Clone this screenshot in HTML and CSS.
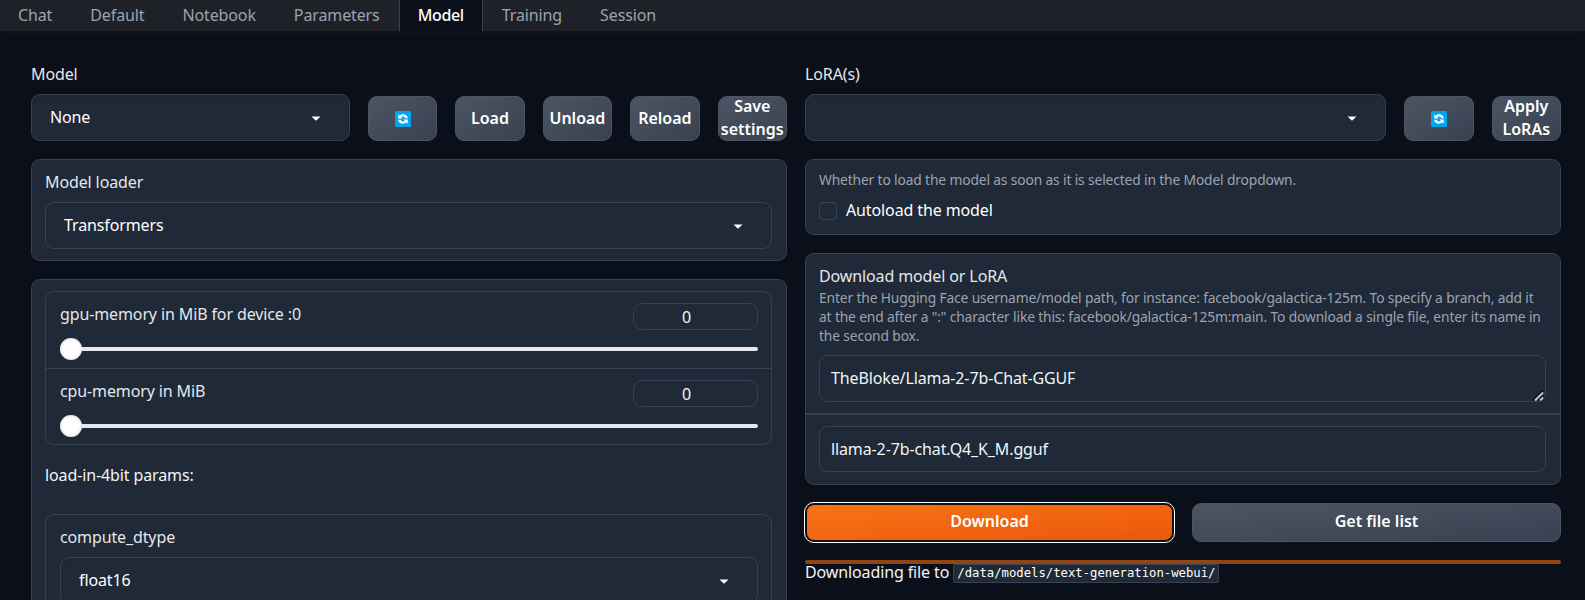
FILE: index.html
```
<!DOCTYPE html>
<html lang="en">
<head>
<meta charset="utf-8">
<title>Text generation web UI</title>
<link rel="stylesheet" href="styles.css">
</head>
<body>
<svg class="defs" width="0" height="0">
  <symbol id="refresh" viewBox="0 0 16 16">
    <rect width="16" height="16" rx="1.5" fill="#00a4ef"/>
    <path d="M3.2 3.2v4.3h4.3L6.100 6.100C7.300 5.100 9.300 5.100 10.600 7.300H12.900C12.300 3.400 7.500 1.900 4.700 4.700ZM12.800 12.800V8.500H8.500L9.900 9.900C8.700 10.900 6.700 10.900 5.400 8.700H3.100C3.700 12.600 8.500 14.100 11.300 11.300Z" fill="#fff"/>
  </symbol>
  <symbol id="caret" viewBox="0 0 10 5"><path d="M.5.5h9L5 4.700Z" fill="#fff"/></symbol>
</svg>
<nav class="tabs">
  <a class="tab">Chat</a><a class="tab">Default</a><a class="tab">Notebook</a><a class="tab">Parameters</a><a class="tab active">Model</a><a class="tab">Training</a><a class="tab">Session</a>
</nav>
<main class="columns">
  <section class="column">
    <div class="row">
      <div class="field"><span class="label">Model</span><div class="select">None<svg class="caret"><use href="#caret"/></svg></div></div>
      <button class="btn tool"><svg class="refresh"><use href="#refresh"/></svg></button>
      <button class="btn tool">Load</button>
      <button class="btn tool">Unload</button>
      <button class="btn tool">Reload</button>
      <button class="btn tool two-line">Save settings</button>
    </div>
    <div class="block loader">
      <span class="label">Model loader</span>
      <div class="select">Transformers<svg class="caret"><use href="#caret"/></svg></div>
    </div>
    <div class="block params">
      <div class="group">
        <div class="slider">
          <div class="slider-head"><span>gpu-memory in MiB for device :0</span><span class="number">0</span></div>
          <div class="track"><i class="thumb"></i></div>
        </div>
        <div class="slider">
          <div class="slider-head"><span>cpu-memory in MiB</span><span class="number">0</span></div>
          <div class="track"><i class="thumb"></i></div>
        </div>
      </div>
      <p class="note">load-in-4bit params:</p>
      <div class="group dtype">
        <span class="label">compute_dtype</span>
        <div class="select">float16<svg class="caret"><use href="#caret"/></svg></div>
      </div>
    </div>
  </section>
  <section class="column">
    <div class="row">
      <div class="field"><span class="label">LoRA(s)</span><div class="select"><svg class="caret"><use href="#caret"/></svg></div></div>
      <button class="btn tool"><svg class="refresh"><use href="#refresh"/></svg></button>
      <button class="btn tool two-line">Apply LoRAs</button>
    </div>
    <div class="block autoload">
      <p class="info">Whether to load the model as soon as it is selected in the Model dropdown.</p>
      <div class="check"><i class="box"></i><span>Autoload the model</span></div>
    </div>
    <div class="block download">
      <div class="repo">
        <span class="label">Download model or LoRA</span>
        <p class="info">Enter the Hugging Face username/model path, for instance: facebook/galactica-125m. To specify a branch, add it at the end after a ":" character like this: facebook/galactica-125m:main. To download a single file, enter its name in the second box.</p>
        <div class="input area">TheBloke/Llama-2-7b-Chat-GGUF
          <svg class="grip" viewBox="0 0 11 11"><path d="M.5 10L9.500 1M5.500 10.500L9.500 6.500" stroke="#05070c" stroke-width="1.800"/><path d="M2 10.500L10 2.500M7 10.500L10 7.500" stroke="#c5c8cd" stroke-width="2"/></svg>
        </div>
      </div>
      <div class="file"><div class="input">llama-2-7b-chat.Q4_K_M.gguf</div></div>
    </div>
    <div class="actions">
      <button class="btn primary">Download</button>
      <button class="btn">Get file list</button>
    </div>
    <div class="progress"></div>
    <p class="status">Downloading file to <code>/data/models/text-generation-webui/</code></p>
  </section>
</main>
</body>
</html>
```
FILE: styles.css
```
* { box-sizing: border-box; }
body {
  margin: 0;
  height: 600px;
  overflow: hidden;
  background: #0b0f19;
  color: #f3f4f6;
  font: 16px/24px "Noto Sans", sans-serif;
  letter-spacing: -.12px;
}
p { margin: 0; }
.defs { position: absolute; }

.tabs {
  display: flex;
  height: 31px;
  margin-left: -1px;
  background: #1f2129;
  box-shadow: 0 2px 5px #141414;
}
.tab {
  height: 31px;
  padding: 3px 18px 0;
  border: solid transparent;
  border-width: 0 1px;
  color: #9ca3af;
}
.tab.active {
  background: #0b0f19;
  border-color: #374151;
  color: #fff;
  font-weight: 500;
  letter-spacing: -.35px;
}

.columns {
  display: grid;
  grid-template-columns: 756px 756px;
  gap: 18px;
  height: 569px;
  overflow: hidden;
  padding: 31px 0 0 31px;
}
.row {
  display: flex;
  align-items: flex-end;
  gap: 18px;
  height: 79px;
}
.field { flex: 1; }
.label {
  display: block;
  height: 32px;
  color: #e5e7eb;
}
.select {
  display: flex;
  align-items: center;
  justify-content: space-between;
  height: 47px;
  padding: 0 28px 1px 18px;
  border: 1px solid #374151;
  border-radius: 9px;
  background: #1f2937;
  box-shadow: inset 0 2px 4px rgba(0, 0, 0, .06);
  color: #fff;
}
.caret {
  width: 10px;
  height: 5px;
  margin-left: auto;
  transform: translateY(1px);
}
.btn {
  display: flex;
  align-items: center;
  justify-content: center;
  padding: 0;
  border: 1px solid #4b5563;
  border-radius: 9px;
  background: linear-gradient(to bottom right, #4b5563, #374151);
  color: #fff;
  font: 600 16px/23px "Noto Sans", sans-serif;
}
.tool {
  width: 69.450px;
  height: 45px;
}
.two-line { padding-bottom: 2px; }
.refresh { width: 16px; height: 16px; }

.block {
  margin-top: 18px;
  border: 1px solid #374151;
  border-radius: 9px;
  background: #1f2937;
}
.loader {
  height: 102px;
  padding: 10px 14px 0 13px;
}
.params {
  height: 400px;
  padding: 11px 14px 0 13px;
}
.group {
  border: 1px solid #374151;
  border-radius: 9px;
}
.slider {
  height: 76px;
  padding: 11px 13px 0 14px;
  color: #e5e7eb;
}
.slider + .slider {
  border-top: 1px solid #374151;
}
.slider-head {
  display: flex;
  justify-content: space-between;
  height: 27px;
  line-height: 23px;
}
.number {
  width: 125px;
  height: 27px;
  padding-right: 18px;
  border: 1px solid #374151;
  border-radius: 9px;
  color: #f3f4f6;
  line-height: 27px;
  text-align: center;
}
.track {
  display: flex;
  align-items: center;
  height: 4px;
  margin-top: 17px;
  border-radius: 2px;
  background: #e5e7eb;
}
.thumb {
  width: 22px;
  height: 22px;
  border-radius: 50%;
  background: #fff;
  box-shadow: inset 0 0 3px #bbb;
}
.note {
  height: 69px;
  padding-top: 18px;
}
.dtype {
  height: 150px;
  padding: 10px 13px 0 14px;
}

.autoload {
  height: 76px;
  padding: 10px 13px;
}
.info {
  color: #9ca3af;
  font-size: 13.800px;
  line-height: 19px;
  letter-spacing: -.14px;
}
.check {
  display: flex;
  align-items: center;
  gap: 9px;
  height: 24px;
  margin-top: 10px;
  color: #fff;
}
.check span { padding-bottom: 2px; }
.box {
  width: 18px;
  height: 18px;
  border: 1px solid #374151;
  border-radius: 4px;
}
.download {
  height: 232px;
}
.repo {
  height: 161px;
  padding: 10px 14px 0 13px;
  border-bottom: 2px solid #374151;
}
.repo .label { height: 24px; }
.file { padding: 11px 14px 0 13px; }
.input {
  height: 46px;
  padding: 10px 11px;
  border: 1px solid #374151;
  border-radius: 9px;
  box-shadow: inset 0 2px 4px rgba(0, 0, 0, .06);
}
.area {
  position: relative;
  height: 47px;
  margin-top: 10px;
}
.grip {
  position: absolute;
  right: 1px;
  bottom: 0;
  width: 11px;
  height: 11px;
}
.actions {
  display: grid;
  grid-template-columns: 369px 369px;
  gap: 18px;
  height: 39px;
  margin-top: 18px;
}
.actions .btn { padding-bottom: 2px; }
.btn.primary {
  border: 2px solid #101010;
  background: linear-gradient(to bottom right, #f97316, #ea580c);
  outline: 1px solid #fff;
}
.progress {
  height: 4px;
  margin-top: 18px;
  border-radius: 2px;
  background: #8f4516;
}
.status {
  display: flex;
  gap: 4px;
  height: 19px;
  line-height: 17px;
}
code {
  height: 19px;
  padding: 0 3px;
  border: 1px solid #374151;
  border-radius: 2px;
  background: #1f2937;
  color: #fff;
  font: 12.250px/17px "DejaVu Sans Mono", monospace;
  letter-spacing: 0;
}
```
